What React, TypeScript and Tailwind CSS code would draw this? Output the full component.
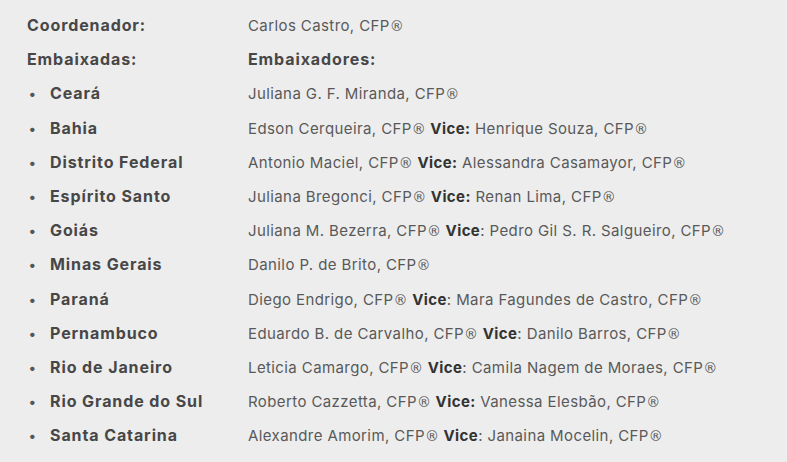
const rows: { state: string; main: string; vice?: string; viceColon?: boolean }[] = [
  { state: "Ceará", main: "Juliana G. F. Miranda, CFP®" },
  { state: "Bahia", main: "Edson Cerqueira, CFP®", vice: "Henrique Souza, CFP®", viceColon: true },
  { state: "Distrito Federal", main: "Antonio Maciel, CFP®", vice: "Alessandra Casamayor, CFP®", viceColon: true },
  { state: "Espírito Santo", main: "Juliana Bregonci, CFP®", vice: "Renan Lima, CFP®", viceColon: true },
  { state: "Goiás", main: "Juliana M. Bezerra, CFP®", vice: "Pedro Gil S. R. Salgueiro, CFP®" },
  { state: "Minas Gerais", main: "Danilo P. de Brito, CFP®" },
  { state: "Paraná", main: "Diego Endrigo, CFP®", vice: "Mara Fagundes de Castro, CFP®" },
  { state: "Pernambuco", main: "Eduardo B. de Carvalho, CFP®", vice: "Danilo Barros, CFP®" },
  { state: "Rio de Janeiro", main: "Leticia Camargo, CFP®", vice: "Camila Nagem de Moraes, CFP®" },
  { state: "Rio Grande do Sul", main: "Roberto Cazzetta, CFP®", vice: "Vanessa Elesbão, CFP®", viceColon: true },
  { state: "Santa Catarina", main: "Alexandre Amorim, CFP®", vice: "Janaina Mocelin, CFP®" },
];

// Inter draws ® as a tiny superscript; the reference has a full-size one
function Name({ text }: { text: string }) {
  const parts = text.split("®");
  return (
    <>
      {parts.map((p, i) => (
        <span key={i}>
          {p}
          {i < parts.length - 1 && (
            <span className="text-[14px] tracking-normal" style={{ fontFamily: "'DejaVu Sans', sans-serif" }}>
              ®
            </span>
          )}
        </span>
      ))}
    </>
  );
}

function Row({ left, right }: { left: React.ReactNode; right: React.ReactNode }) {
  return (
    <div className="flex items-baseline h-[34.2px]">
      <div className="w-[221px] shrink-0 text-[16px] font-bold tracking-[0.9px] text-[#474747]">{left}</div>
      <div className="text-[15px] tracking-[0.4px] text-[#595959]">{right}</div>
    </div>
  );
}

export default function App() {
  return (
    <div
      className="w-[787px] h-[462px] bg-[#ededed] pl-[27px] pt-[13px] overflow-hidden"
      style={{ fontFamily: "Inter, 'Noto Sans', sans-serif" }}
    >
      <Row left="Coordenador:" right={<Name text="Carlos Castro, CFP®" />} />
      <Row
        left="Embaixadas:"
        right={
          <span className="text-[16px] font-bold tracking-[0.9px] text-[#474747]">Embaixadores:</span>
        }
      />
      {rows.map((r) => (
        <Row
          key={r.state}
          left={
            <span className="flex items-baseline">
              <span className="w-[23px] pl-[2px] text-[14px] text-[#555]">•</span>
              <span>{r.state}</span>
            </span>
          }
          right={
            <span>
              <Name text={r.main} />
              {r.vice && (
                <>
                  {" "}
                  <span className="font-bold text-[#333]">{r.viceColon ? "Vice:" : "Vice"}</span>
                  {r.viceColon ? " " : ": "}
                  <Name text={r.vice} />
                </>
              )}
            </span>
          }
        />
      ))}
    </div>
  );
}
